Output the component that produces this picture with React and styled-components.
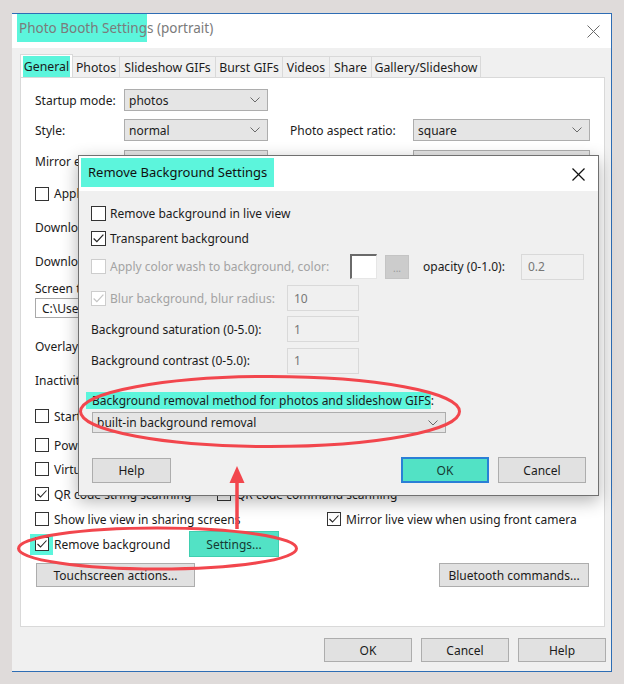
import React from 'react';
import styled, { createGlobalStyle } from 'styled-components';

const CYAN = '#5cf5dc';
const CYAN_BTN = '#52e2c5';
const RED = '#f2464d';

const GlobalStyle = createGlobalStyle`
  html, body { margin: 0; padding: 0; background: #dfdbda; }
  #root { width: 624px; height: 684px; overflow: hidden; }
  * { box-sizing: border-box; }
`;

const Stage = styled.div`
  position: relative;
  width: 624px;
  height: 684px;
  padding: 13px 12px 0 12px;
  font-family: "Noto Sans", "Open Sans", sans-serif;
  font-size: 12px;
  color: #1b1b1b;
`;

const Window = styled.div`
  width: 600px;
  height: 659px;
  display: flex;
  flex-direction: column;
  background: #f0f0f0;
  border-top: 1px solid #2e6db4;
  border-right: 1px solid #2e6db4;
  border-bottom: 1px solid #2e6db4;
`;

const TitleBar = styled.div`
  height: 34px;
  flex-shrink: 0;
  background: #fff;
  display: flex;
  align-items: flex-start;
  justify-content: space-between;
  padding: 0 11px 0 7px;
`;

const WindowTitle = styled.div`
  font-size: 13.5px;
  line-height: 28px;
  color: #7b7b7b;
  white-space: nowrap;
`;

const Mark = styled.span`
  background: ${CYAN};
  display: inline-block;
  padding: ${(p) => p.$pad || '0'};
  margin-left: ${(p) => p.$ml || 0}px;
`;

const CloseBtn = styled.span`
  display: flex;
  align-items: center;
  justify-content: center;
  width: 14px;
  height: ${(p) => p.$h}px;
  color: ${(p) => p.$color};
`;

const WinBody = styled.div`
  flex: 1;
  display: flex;
  flex-direction: column;
  padding: 6px 6px 0 8px;
`;

const Tabs = styled.div`
  display: flex;
  align-items: flex-end;
  height: 23px;
  flex-shrink: 0;
  margin-left: 1px;
`;

const Tab = styled.div`
  width: ${(p) => p.$w}px;
  height: ${(p) => (p.$active ? 23 : 21)}px;
  display: flex;
  align-items: center;
  justify-content: center;
  border: 1px solid #d9d9d9;
  border-bottom: none;
  margin-left: -1px;
  background: ${(p) => (p.$active ? '#fff' : '#f0f0f0')};
  font-size: 12.3px;
  white-space: nowrap;
  line-height: 21px;
`;

const Panel = styled.div`
  height: 550px;
  flex-shrink: 0;
  background: #fff;
  border: 1px solid #d9d9d9;
  padding: 7px 0 0 14px;
  display: flex;
  flex-direction: column;
`;

const Footer = styled.div`
  display: flex;
  justify-content: flex-end;
  gap: 9px;
  padding-top: 11px;
  margin-right: -1px;
`;

const Row = styled.div`
  display: flex;
  align-items: center;
  height: ${(p) => p.$h}px;
  margin-top: ${(p) => p.$mt || 0}px;
  flex-shrink: 0;
`;

const Cell = styled.div`
  width: ${(p) => p.$w}px;
  flex-shrink: 0;
  display: flex;
  align-items: center;
  margin-left: ${(p) => p.$ml || 0}px;
`;

const Label = styled.span`
  white-space: nowrap;
  font-size: 12px;
  color: ${(p) => (p.$disabled ? '#a3a3a3' : '#1b1b1b')};
`;

const Select = styled.div`
  width: ${(p) => p.$w}px;
  height: ${(p) => p.$h || 22}px;
  margin-left: ${(p) => p.$ml || 0}px;
  flex-shrink: 0;
  background: #e5e5e5;
  border: 1px solid #adadad;
  display: flex;
  align-items: center;
  justify-content: space-between;
  padding: 0 7px 0 4px;
  font-size: 12px;
  white-space: nowrap;
  overflow: hidden;
`;

const TextBox = styled.div`
  width: ${(p) => p.$w}px;
  height: ${(p) => p.$h || 26}px;
  flex-shrink: 0;
  border: 1px solid ${(p) => (p.$disabled ? '#d9d9d9' : '#a9a9a9')};
  background: ${(p) => (p.$disabled ? '#f0f0f0' : '#fff')};
  color: ${(p) => (p.$disabled ? '#777' : '#1b1b1b')};
  display: flex;
  align-items: center;
  padding-left: 6px;
  font-size: 12px;
  white-space: nowrap;
  overflow: hidden;
`;

const Button = styled.button`
  width: ${(p) => p.$w}px;
  height: ${(p) => p.$h || 24}px;
  margin-left: ${(p) => p.$ml || 0}px;
  flex-shrink: 0;
  background: ${(p) => (p.$accent ? CYAN_BTN : '#e1e1e1')};
  border: ${(p) =>
    p.$default ? '2px solid #2a7fd6' : p.$accent ? '1px solid #3fcfb0' : '1px solid #adadad'};
  font-family: inherit;
  font-size: 12px;
  color: ${(p) => (p.$accent ? '#163a33' : '#1b1b1b')};
  padding: 0;
  white-space: nowrap;
`;

const Box = styled.span`
  width: ${(p) => p.$size}px;
  height: ${(p) => p.$size}px;
  flex-shrink: 0;
  border: 1px solid ${(p) => (p.$disabled ? '#cdcdcd' : '#333')};
  background: #fff;
  display: inline-flex;
  align-items: center;
  justify-content: center;
  margin-right: ${(p) => p.$gap}px;
`;

const BoxMark = styled.span`
  display: inline-flex;
  background: ${CYAN};
  padding: 3px 4px 4px 5px;
  margin-left: -5px;
  margin-right: 1px;
`;

const Dialog = styled.div`
  position: absolute;
  left: 78px;
  top: 155px;
  width: 521px;
  height: 341px;
  border: 1px solid #707070;
  background: #f0f0f0;
  box-shadow: 0 5px 16px rgba(0, 0, 0, 0.3);
  display: flex;
  flex-direction: column;
`;

const DialogTitleBar = styled.div`
  height: 35px;
  flex-shrink: 0;
  background: #fff;
  display: flex;
  align-items: flex-start;
  justify-content: space-between;
  padding: 2px 13px 0 2px;
`;

const DialogTitle = styled.div`
  font-size: 13px;
  line-height: 29px;
  color: #111;
  white-space: nowrap;
`;

const DialogBody = styled.div`
  flex: 1;
  display: flex;
  flex-direction: column;
  padding: 10px 12px 0 12px;
`;

const Swatch = styled.span`
  width: 27px;
  height: 25px;
  flex-shrink: 0;
  background: #fff;
  border-top: 2px solid #6a6a6a;
  border-left: 2px solid #6a6a6a;
  border-right: 1px solid #e6e6e6;
  border-bottom: 1px solid #e6e6e6;
`;

const DotsButton = styled.span`
  width: 24px;
  height: 24px;
  margin-left: 8px;
  flex-shrink: 0;
  background: #cccccc;
  border: 1px solid #c4c4c4;
  color: #9a9a9a;
  display: flex;
  align-items: flex-end;
  justify-content: center;
  padding-bottom: 5px;
  font-size: 10px;
  line-height: 10px;
`;

const ButtonRow = styled.div`
  display: flex;
  justify-content: space-between;
  align-items: center;
  margin-top: 24px;
  height: 26px;
`;

const ButtonGroup = styled.div`
  display: flex;
  gap: 9px;
`;

const Overlay = styled.svg`
  position: absolute;
  left: 0;
  top: 0;
  pointer-events: none;
`;

const Chevron = () => (
  <svg width="10" height="6" viewBox="0 0 10 6">
    <polyline points="0.5,0.5 5,5 9.5,0.5" fill="none" stroke="#6a6a6a" strokeWidth="1" />
  </svg>
);

const XIcon = ({ size = 13, stroke = 1 }) => (
  <svg width={size} height={size} viewBox="0 0 13 13">
    <line x1="0.5" y1="0.5" x2="12.5" y2="12.5" stroke="currentColor" strokeWidth={stroke} />
    <line x1="12.5" y1="0.5" x2="0.5" y2="12.5" stroke="currentColor" strokeWidth={stroke} />
  </svg>
);

const Check = ({ checked, disabled, size = 14, gap = 5 }) => (
  <Box $size={size} $disabled={disabled} $gap={gap}>
    {checked && (
      <svg width={size - 2} height={size - 2} viewBox="0 0 12 12">
        <polyline
          points="1.5,6 4.5,9 10.5,2.5"
          fill="none"
          stroke={disabled ? '#c4c4c4' : '#222'}
          strokeWidth="1.1"
        />
      </svg>
    )}
  </Box>
);

const DropDown = ({ w, h, ml, children }) => (
  <Select $w={w} $h={h} $ml={ml}>
    <span>{children}</span>
    <Chevron />
  </Select>
);

const tabs = [
  ['General', 53],
  ['Photos', 48],
  ['Slideshow GIFs', 97],
  ['Burst GIFs', 68],
  ['Videos', 48],
  ['Share', 43],
  ['Gallery/Slideshow', 110],
];

export default function App() {
  return (
    <>
      <GlobalStyle />
      <Stage>
        <Window>
          <TitleBar>
            <WindowTitle>
              <Mark $pad="0 0 0 2px" $ml={-2}>Photo Booth Setting</Mark>s (portrait)
            </WindowTitle>
            <CloseBtn $h={34} $color="#6a6a6a">
              <XIcon />
            </CloseBtn>
          </TitleBar>
          <WinBody>
            <Tabs>
              {tabs.map(([name, w], i) => (
                <Tab key={name} $w={w} $active={i === 0}>
                  {i === 0 ? <Mark $pad="0 1px">{name}</Mark> : name}
                </Tab>
              ))}
            </Tabs>
            <Panel>
              <Row $h={30}>
                <Cell $w={89}><Label>Startup mode:</Label></Cell>
                <DropDown w={144}>photos</DropDown>
              </Row>
              <Row $h={30}>
                <Cell $w={89}><Label>Style:</Label></Cell>
                <DropDown w={144}>normal</DropDown>
                <Cell $w={123} $ml={22}><Label>Photo aspect ratio:</Label></Cell>
                <DropDown w={177}>square</DropDown>
              </Row>
              <Row $h={32}>
                <Cell $w={89}><Label>Mirror effect:</Label></Cell>
                <DropDown w={144}>off</DropDown>
                <Cell $w={123} $ml={22}><Label>Live view rotation:</Label></Cell>
                <DropDown w={177}>default (landscape)</DropDown>
              </Row>
              <Row $h={33}>
                <Check />
                <Label>Apply overlay to live view</Label>
              </Row>
              <Row $h={34}>
                <Label>Download folder:</Label>
              </Row>
              <Row $h={34}>
                <Label>Download options:</Label>
              </Row>
              <Row $h={20}>
                <Label>Screen text font:</Label>
              </Row>
              <Row $h={20}>
                <TextBox $w={430} $h={20}>C:\Users\Public\Documents</TextBox>
              </Row>
              <Row $h={32} $mt={12}>
                <Label>Overlay image:</Label>
              </Row>
              <Row $h={36}>
                <Label>Inactivity timeout:</Label>
              </Row>
              <Row $h={36}>
                <Check />
                <Label>Start in full screen mode</Label>
              </Row>
              <Row $h={22}>
                <Check />
                <Label>Power saving mode</Label>
              </Row>
              <Row $h={26}>
                <Check />
                <Label>Virtual keyboard</Label>
              </Row>
              <Row $h={24}>
                <Cell $w={182}>
                  <Check checked />
                  <Label>QR code string scanning</Label>
                </Cell>
                <Check />
                <Label>QR code command scanning</Label>
              </Row>
              <Row $h={26}>
                <Cell $w={292}>
                  <Check />
                  <Label>Show live view in sharing screens</Label>
                </Cell>
                <Check checked />
                <Label>Mirror live view when using front camera</Label>
              </Row>
              <Row $h={24}>
                <Cell $w={154}>
                  <BoxMark>
                    <Check checked gap={0} />
                  </BoxMark>
                  <Label>Remove background</Label>
                </Cell>
                <Button $w={90} $h={26} $accent>Settings...</Button>
              </Row>
              <Row $h={38}>
                <Button $w={159} $ml={1}>Touchscreen actions...</Button>
                <Button $w={150} $ml={244}>Bluetooth commands...</Button>
              </Row>
            </Panel>
            <Footer>
              <Button $w={88}>OK</Button>
              <Button $w={88}>Cancel</Button>
              <Button $w={88}>Help</Button>
            </Footer>
          </WinBody>
        </Window>

        <Dialog>
          <DialogTitleBar>
            <DialogTitle>
              <Mark $pad="0 7px">Remove Background Settings</Mark>
            </DialogTitle>
            <CloseBtn $h={33} $color="#111">
              <XIcon stroke={1.2} />
            </CloseBtn>
          </DialogTitleBar>
          <DialogBody>
            <Row $h={25}>
              <Check size={15} gap={4} />
              <Label>Remove background in live view</Label>
            </Row>
            <Row $h={25}>
              <Check size={15} gap={4} checked />
              <Label>Transparent background</Label>
            </Row>
            <Row $h={31}>
              <Cell $w={259}>
                <Check size={15} gap={4} disabled />
                <Label $disabled>Apply color wash to background, color:</Label>
              </Cell>
              <Swatch />
              <DotsButton>...</DotsButton>
              <Cell $w={98} $ml={14}><Label>opacity (0-1.0):</Label></Cell>
              <TextBox $w={63} $disabled>0.2</TextBox>
            </Row>
            <Row $h={32}>
              <Cell $w={196}>
                <Check size={15} gap={4} checked disabled />
                <Label $disabled>Blur background, blur radius:</Label>
              </Cell>
              <TextBox $w={72} $disabled>10</TextBox>
            </Row>
            <Row $h={30}>
              <Cell $w={196}><Label>Background saturation (0-5.0):</Label></Cell>
              <TextBox $w={72} $disabled>1</TextBox>
            </Row>
            <Row $h={33}>
              <Cell $w={196}><Label>Background contrast (0-5.0):</Label></Cell>
              <TextBox $w={72} $disabled>1</TextBox>
            </Row>
            <Row $h={20} $mt={13}>
              <Label>
                <Mark $pad="0 0 0 6px" $ml={-5}>
                  Background removal method for photos and slideshow GIFS
                </Mark>
                :
              </Label>
            </Row>
            <Row $h={21} $mt={2}>
              <DropDown w={354} h={21} ml={1}>built-in background removal</DropDown>
            </Row>
            <ButtonRow>
              <Button $w={79} $h={25} $ml={1}>Help</Button>
              <ButtonGroup>
                <Button $w={88} $h={26} $accent $default>OK</Button>
                <Button $w={88} $h={26}>Cancel</Button>
              </ButtonGroup>
            </ButtonRow>
          </DialogBody>
        </Dialog>

        <Overlay width="624" height="684" viewBox="0 0 624 684">
          <ellipse cx="270" cy="411.5" rx="189.5" ry="35" fill="none" stroke={RED} strokeWidth="3" />
          <ellipse cx="157.5" cy="548.5" rx="139" ry="20.5" fill="none" stroke={RED} strokeWidth="3" />
          <line x1="237" y1="529" x2="237" y2="480" stroke={RED} strokeWidth="3.5" />
          <polygon points="237,466 229.5,483 244.5,483" fill={RED} />
        </Overlay>
      </Stage>
    </>
  );
}
